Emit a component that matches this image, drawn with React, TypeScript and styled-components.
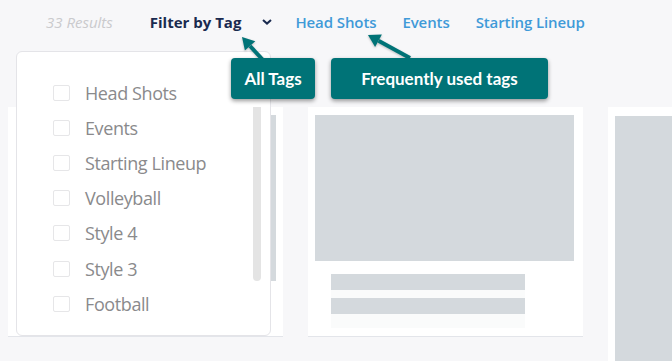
import React from "react"
import styled, {createGlobalStyle} from "styled-components"



const GlobalStyle = createGlobalStyle`
  html, body { margin: 0; padding: 0; background: #f7f7f9; }
  body { font-family: "Open Sans", "Liberation Sans", sans-serif; }
  * { box-sizing: border-box; }
`

const TAGS = ['Head Shots','Events','Starting Lineup','Volleyball','Style 4','Style 3','Football']
const FREQUENT = ['Head Shots','Events','Starting Lineup']



export default function App(){
  return <Page>
    <GlobalStyle/>

    <TopBar>
      <Results>33 Results</Results>
      <FilterToggle>
        Filter by Tag
        <Chevron viewBox="0 0 10 6"><path d="M1 1 L5 4.6 L9 1"/></Chevron>
      </FilterToggle>
      <TagLinks>
        { FREQUENT.map(t=><TagLink key={t}>{t}</TagLink>) }
      </TagLinks>
    </TopBar>

    <Cards>
      <Card>
        <Thumb h={166} inset={20}/>
      </Card>
      <Card>
        <Thumb h={146}/>
        <Lines>
          <Line/>
          <Line/>
        </Lines>
      </Card>
      <Card tall>
        <Thumb h={260}/>
      </Card>
    </Cards>

    <Dropdown>
      { TAGS.map(t=><TagRow key={t}>
        <Check/>
        <span>{t}</span>
      </TagRow>) }
      <ScrollThumb/>
    </Dropdown>

    <Arrows viewBox="0 0 672 100">
      <line x1="263" y1="60" x2="250" y2="46"/>
      <polygon points="242,37 255.3,41.2 244.9,50.6"/>
      <line x1="410" y1="58" x2="378.5" y2="40.8"/>
      <polygon points="368,35 381.9,34.6 375.1,46.9"/>
    </Arrows>

    <Callout left={231} width={84}>All Tags</Callout>
    <Callout left={331} width={217}>Frequently used tags</Callout>
  </Page>
}



const Page = styled.div`
  position: relative;
  width: 672px;
  height: 361px;
  overflow: hidden;
  background: #f7f7f9;
`

const TopBar = styled.div`
  display: flex;
  align-items: center;
  height: 44px;
  padding-left: 46px;
`
const Results = styled.span`
  font-size: 15px;
  font-style: italic;
  color: #cacacd;
  margin-right: 37px;
`
const FilterToggle = styled.div`
  display: flex;
  align-items: center;
  font-size: 15px;
  font-weight: 700;
  color: #1a2a4f;
  gap: 21px;
  margin-right: 23px;
`
const Chevron = styled.svg`
  width: 10px;
  height: 6px;
  fill: none;
  stroke: #1a2a4f;
  stroke-width: 2;
`
const TagLinks = styled.div`
  display: flex;
  gap: 26px;
`
const TagLink = styled.a`
  font-size: 15px;
  font-weight: 600;
  letter-spacing: -0.1px;
  color: #3f9ad8;
`

const Cards = styled.div`
  display: flex;
  gap: 25px;
  padding-left: 8px;
  margin-top: 63px;
`
const Card = styled.div<{tall?: boolean}>`
  width: 275px;
  height: ${p=>p.tall ? 300 : 230}px;
  flex-shrink: 0;
  background: #fff;
  border-bottom: 1px solid #e3e5ea;
  padding: ${p=>p.tall ? 9 : 8}px 7px 0 7px;
`
const Thumb = styled.div<{h: number, inset?: number}>`
  height: ${p=>p.h}px;
  margin-left: ${p=>p.inset ?? 0}px;
  margin-right: ${p=>p.inset ? 0 : 2}px;
  background: #d4d9dd;
`
const Lines = styled.div`
  display: flex;
  flex-direction: column;
  gap: 8px;
  padding: 13px 0 0 16px;
`
const Line = styled.div`
  width: 194px;
  height: 16px;
  background: #d4d9dd;
  box-shadow: 0 8px 0 #fafbfb;
  &:last-child { box-shadow: 0 14px 0 #fafbfb; }
`

const Dropdown = styled.div`
  position: absolute;
  left: 16px;
  top: 51px;
  width: 255px;
  height: 285px;
  background: #fff;
  border: 1px solid #e4e4e8;
  border-radius: 6px;
  padding: 23px 0 0 36px;
  display: flex;
  flex-direction: column;
`
const TagRow = styled.label`
  display: flex;
  align-items: center;
  gap: 15px;
  height: 35.2px;
  font-size: 18px;
  letter-spacing: -0.4px;
  color: #8a8a8c;
`
const Check = styled.span`
  width: 17px;
  height: 16px;
  border: 1px solid #e6e6e8;
  border-radius: 2px;
  background: #fff;
`
const ScrollThumb = styled.div`
  position: absolute;
  left: 236px;
  top: 55px;
  width: 8px;
  height: 174px;
  background: #e4e4e4;
  border-radius: 0 0 4px 4px;
`

const Arrows = styled.svg`
  position: absolute;
  left: 0;
  top: 0;
  width: 672px;
  height: 100px;
  pointer-events: none;
  filter: drop-shadow(0 1px 1px rgba(0,0,0,0.25));
  line { stroke: #007377; stroke-width: 4; }
  polygon { fill: #007377; }
`

const Callout = styled.div<{left: number, width: number}>`
  position: absolute;
  top: 58px;
  left: ${p=>p.left}px;
  width: ${p=>p.width}px;
  height: 41px;
  display: flex;
  align-items: center;
  justify-content: center;
  background: #007377;
  color: #fff;
  border-radius: 4px;
  box-shadow: 0 2px 4px rgba(0,0,0,0.4);
  font-family: Lato, "Liberation Sans", sans-serif;
  font-weight: 700;
  font-size: 17px;
`
